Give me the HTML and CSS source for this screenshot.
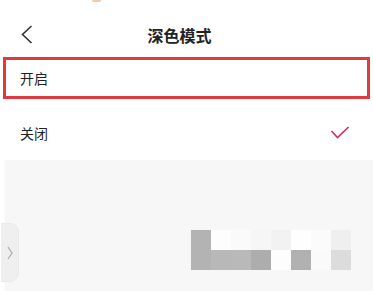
FILE: index.html
```html
<!DOCTYPE html>
<html lang="zh-CN">
<head>
  <meta charset="UTF-8" />
  <meta name="viewport" content="width=device-width, initial-scale=1.0"/>
  <title>深色模式</title>
  <link rel="stylesheet" href="styles.css">
</head>
<body>
  <div class="status">
    <span class="status-dot"></span>
  </div>

  <div class="nav">
    <svg class="back" width="12" height="19" viewBox="0 0 12 19">
      <polyline points="10.5,1 1.5,9.5 10.5,18" fill="none" stroke="#333" stroke-width="1.6"/>
    </svg>
    <div class="title">深色模式</div>
  </div>

  <div class="option highlight">开启</div>
  <div class="option">
    <span>关闭</span>
    <svg class="check" width="20" height="14" viewBox="0 0 20 14">
      <polyline points="1.5,5 7.5,11.5 18.5,1" fill="none" stroke="#d42d63" stroke-width="1.6"/>
    </svg>
  </div>

  <div class="blank">
    <div class="side-tab">
      <svg width="6" height="14" viewBox="0 0 6 14">
        <polyline points="1,1 5,7 1,13" fill="none" stroke="#aaa" stroke-width="1.2"/>
      </svg>
    </div>
    <div class="mosaic">
      <div class="cell g1"></div>
      <div class="cell g2"></div>
      <div class="cell g3"></div>
      <div class="cell g4"></div>
      <div class="cell g5"></div>
      <div class="cell g6"></div>
      <div class="cell g7"></div>
      <div class="cell g8"></div>
      <div class="cell g1"></div>
      <div class="cell g9"></div>
      <div class="cell g10"></div>
      <div class="cell g11"></div>
      <div class="cell g2"></div>
      <div class="cell g12"></div>
      <div class="cell g3"></div>
      <div class="cell g13"></div>
    </div>
  </div>
</body>
</html>
```

FILE: styles.css
```css
body {
  margin: 0;
  width: 373px;
  height: 291px;
  overflow: hidden;
  background: #fff;
  font-family: "Noto Sans CJK SC", "Noto Sans", sans-serif;
  color: #222;
}

.status {
  height: 15px;
}

.status-dot {
  display: block;
  width: 9px;
  height: 2px;
  margin-left: 92px;
  background: #f3c9a6;
  border-radius: 0 0 3px 3px;
}

.nav {
  position: relative;
  height: 40px;
  display: flex;
  align-items: center;
  justify-content: center;
}

.back {
  position: absolute;
  left: 21px;
  top: 10px;
}

.title {
  font-size: 16px;
  font-weight: bold;
  color: #222;
  margin-left: -14px;
}

.option {
  display: flex;
  align-items: center;
  justify-content: space-between;
  height: 55px;
  padding: 6px 23px 0 20px;
  font-size: 14px;
}

.option.highlight {
  height: 36px;
  margin: 2px 3px 0;
  padding: 0 14px;
  border: 3px solid #e0393f;
}

.check {
  margin-top: 1px;
}

.blank {
  position: relative;
  height: 131px;
  background: #f7f7f7;
  border-left: 1px solid #fbfbfb;
  margin-left: 4px;
}

.side-tab {
  position: absolute;
  left: -4px;
  top: 63px;
  width: 17px;
  height: 57px;
  background: #efefef;
  border: 1px solid #e9e9e9;
  border-left: none;
  border-radius: 0 9px 9px 0;
  display: flex;
  align-items: center;
  justify-content: center;
}

.mosaic {
  position: absolute;
  left: 186px;
  top: 70px;
  display: grid;
  grid-template-columns: repeat(8, 20px);
  grid-auto-rows: 20px;
}

.g1 { background: #b3b3b3; }
.g2 { background: #fdfdfd; }
.g3 { background: #fafafa; }
.g4 { background: #f6f6f6; }
.g5 { background: #f2f2f2; }
.g6 { background: #fefefe; }
.g7 { background: #fbfbfb; }
.g8 { background: #efefef; }
.g9 { background: #b8b8b8; }
.g10 { background: #b9b9b9; }
.g11 { background: #adadad; }
.g12 { background: #b1b1b1; }
.g13 { background: #dcdcdc; }
```
